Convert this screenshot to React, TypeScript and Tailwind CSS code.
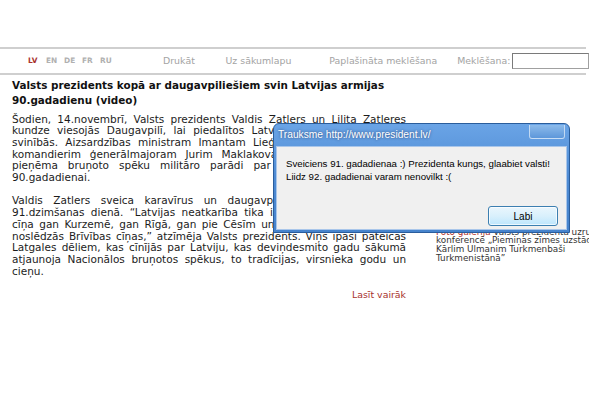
import React from "react";

const J = "whitespace-nowrap text-justify [text-align-last:justify]";

function Line({ children, last = false }: { children: React.ReactNode; last?: boolean }) {
  return <div className={last ? "whitespace-nowrap text-left" : J}>{children}</div>;
}

export default function App() {
  return (
    <div
      className="relative w-[589px] h-[401px] overflow-hidden bg-white text-[#1a1a1a]"
      style={{ fontFamily: '"DejaVu Sans", Verdana, sans-serif' }}
    >
      <div className="h-[47px]" />
      <div className="h-[2px] w-[586px] bg-[#cfcfcf]" />
      {/* nav row */}
      <div className="flex h-[24px] items-center whitespace-nowrap text-[9.4px] text-[#a3a3a3]">
        <div className="ml-[28px] flex text-[7.4px] font-bold">
          <span className="w-[18px] text-[#a8322d]">LV</span>
          <span className="w-[18px] text-[#b0b0b0]">EN</span>
          <span className="w-[18px] text-[#b0b0b0]">DE</span>
          <span className="w-[18px] text-[#b0b0b0]">FR</span>
          <span className="w-[18px] text-[#b0b0b0]">RU</span>
        </div>
        <span className="ml-[45px] w-[65px]">Drukāt</span>
        <span className="w-[108px]">Uz sākumlapu</span>
        <span className="w-[133px]">Paplašināta meklēšana</span>
        <span className="w-[57px]">Meklēšana:</span>
        <div className="h-[16px] w-[80px] border border-[#a0a0a0] border-t-[#7a7a7a] border-l-[#7a7a7a] bg-white" />
      </div>
      <div className="h-[2px] w-[586px] bg-[#cfcfcf]" />

      {/* content */}
      <div className="flex">
        <div className="ml-[12px] w-[401px]">
          <h1 className="mt-[2.5px] text-[10.4px] font-bold leading-[15px] text-[#111]">
            Valsts prezidents kopā ar daugavpiliešiem svin Latvijas armijas 90.gadadienu (video)
          </h1>
          <div className="mt-[6px] text-[10.5px] leading-[11.7px] text-[#1c1c1c]">
            <Line>Šodien, 14.novembrī, Valsts prezidents Valdis Zatlers un Lilita Zatleres</Line>
            <Line>kundze viesojās Daugavpilī, lai piedalītos Latvijas armijas gadadienas</Line>
            <Line>svinībās. Aizsardzības ministram Imantam Lieģim un Nacionālo spēku</Line>
            <Line>komandierim ģenerālmajoram Jurim Maklakovam kopā ar prezidentu</Line>
            <Line>pieņēma bruņoto spēku militāro parādi par godu Latvijas armijas</Line>
            <Line last>90.gadadienai.</Line>
            <div className="h-[11.7px]" />
            <Line>Valdis Zatlers sveica karavīrus un daugavpiliešus Latvijas armijas</Line>
            <Line>91.dzimšanas dienā. “Latvijas neatkarība tika izcīnīta smagās kaujās –</Line>
            <Line>cīņa gan Kurzemē, gan Rīgā, gan pie Cēsīm un Latgalē, kur 1920.gadā</Line>
            <Line>noslēdzās Brīvības cīņas,” atzīmēja Valsts prezidents. Viņš īpaši pateicās</Line>
            <Line>Latgales dēliem, kas cīnījās par Latviju, kas deviņdesmito gadu sākumā</Line>
            <Line>atjaunoja Nacionālos bruņotos spēkus, to tradīcijas, virsnieka godu un</Line>
            <Line last>cieņu.</Line>
          </div>
          <div className="mt-[12px] ml-[340px] whitespace-nowrap text-[9.4px] leading-[12px] text-[#a8322d]">
            Lasīt vairāk
          </div>
        </div>
        <div className="ml-[30px] whitespace-nowrap pt-[152.6px] text-[8.8px] leading-[8.7px] text-[#333]">
          <div>
            <span className="text-[#b0302b]">Foto galerija</span> Valsts prezidenta uzruna
          </div>
          <div>konferencē „Piemiņas zīmes uzstādīšana</div>
          <div>Kārlim Ulmanim Turkmenbaši</div>
          <div>Turkmenistānā”</div>
        </div>
      </div>

      {/* alert dialog */}
      <div
        className="absolute left-[273px] top-[123px] flex h-[110px] w-[297px] flex-col rounded-t-[6px] border border-[#2a5d9c] bg-gradient-to-b from-[#6aa4e6] via-[#4d8ad3] to-[#4683cc]"
        style={{ fontFamily: '"Liberation Sans", Arial, sans-serif' }}
      >
        <div className="relative flex h-[22px] items-center pl-[4px] text-[10.2px] text-white [text-shadow:0_0_3px_rgba(0,0,40,0.6)]">
          Trauksme http://www.president.lv/
          <div className="absolute right-[4px] top-[1px] h-[14px] w-[36px] rounded-b-[3px] border border-t-0 border-[#d7e6f7]/80 bg-gradient-to-b from-[#8dbbeb] to-[#5d97da]" />
        </div>
        <div className="mx-[2px] mb-[2px] flex flex-1 flex-col border border-[#a9c6ea] bg-[#f0f0f0]">
          <div className="pl-[9px] pt-[10px] text-[9.7px] leading-[13px] text-black">
            <div>Sveiciens 91. gadadienaa :) Prezidenta kungs, glaabiet valsti!</div>
            <div>Liidz 92. gadadienai varam nenovilkt :(</div>
          </div>
          <div className="mt-auto flex justify-end pb-[3px] pr-[8px]">
            <div className="flex h-[20px] w-[70px] items-center justify-center rounded-[3px] border border-[#3c7fb1] bg-gradient-to-b from-[#eaf6fd] via-[#d9f0fc] to-[#bee6fd] text-[10px] text-black shadow-[inset_0_0_0_1px_rgba(255,255,255,0.7)]">
              Labi
            </div>
          </div>
        </div>
      </div>
    </div>
  );
}
